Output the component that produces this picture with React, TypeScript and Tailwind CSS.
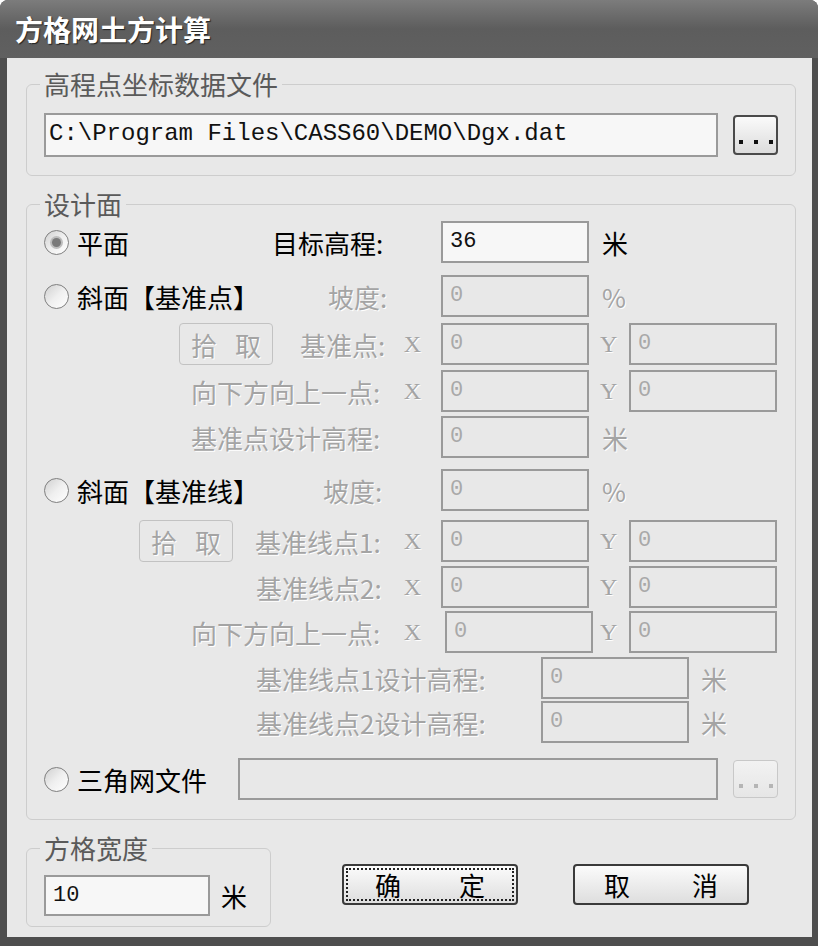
import React from "react";

function Radio({ checked }: { checked?: boolean }) {
  return (
    <span className="w-[25px] h-[25px] rounded-full border border-[#7f7f7f] bg-linear-to-br from-[#d0d0d0] via-[#efefef] to-[#ffffff] flex items-center justify-center shrink-0">
      {checked && <span className="w-[9px] h-[9px] rounded-full bg-[#7a7a7a] ring-2 ring-[#bdbdbd]" />}
    </span>
  );
}

function Field({ value, enabled, cls }: { value: string; enabled?: boolean; cls: string }) {
  return (
    <div
      className={
        "h-[42px] border-2 border-[#9a9a9a] flex items-center pl-[7px] pb-[1px] text-[22px] font-['Liberation_Mono',monospace] shrink-0 " +
        (enabled ? "bg-[#f7f7f7] text-[#111]" : "text-[#a9a9a9]") +
        " " +
        cls
      }
    >
      {value}
    </div>
  );
}

const DIS = "text-[#a4a4a4] [text-shadow:1px_1px_0_#ffffff]";

function X() {
  return <span className={"ml-auto mr-[20px] text-[24px] leading-none font-['Liberation_Serif',serif] " + DIS}>X</span>;
}

function YCol() {
  return (
    <div className="w-[40px] shrink-0 pl-[11px] flex items-center">
      <span className={"text-[24px] leading-none font-['Liberation_Serif',serif] " + DIS}>Y</span>
    </div>
  );
}

function Unit({ text, enabled }: { text: string; enabled?: boolean }) {
  return (
    <div className={"w-[40px] shrink-0 pl-[13px] text-[26px] " + (enabled ? "text-black" : DIS)}>{text}</div>
  );
}

function PickBtn({ cls }: { cls: string }) {
  return (
    <div className={"h-[42px] w-[94px] shrink-0 rounded-[4px] border border-[#c2c2c2] flex items-center justify-center gap-[18px] text-[26px] " + DIS + " " + cls}>
      <span>拾</span>
      <span>取</span>
    </div>
  );
}

function DotBtn({ enabled, cls }: { enabled?: boolean; cls: string }) {
  return (
    <div
      className={
        "w-[45px] shrink-0 rounded-[4px] flex items-end justify-center gap-[11px] pb-[9px] " +
        (enabled
          ? "h-[40px] border-2 border-[#4a4a4a] bg-linear-to-b from-[#fafafa] to-[#dcdcdc]"
          : "h-[38px] border border-[#c8c8c8] bg-linear-to-b from-[#f2f2f2] to-[#e6e6e6]") +
        " " +
        cls
      }
    >
      <span className={"w-[4px] h-[4px] " + (enabled ? "bg-[#111]" : "bg-[#b5b5b5]")} />
      <span className={"w-[4px] h-[4px] " + (enabled ? "bg-[#111]" : "bg-[#b5b5b5]")} />
      <span className={"w-[4px] h-[4px] " + (enabled ? "bg-[#111]" : "bg-[#b5b5b5]")} />
    </div>
  );
}

function Legend({ text }: { text: string }) {
  return (
    <legend className="ml-[13px] px-[4px] text-[26px] leading-[32px] text-[#5a5a5a]">{text}</legend>
  );
}

export default function App() {
  return (
    <div className="w-[818px] h-[946px] bg-white font-['Noto_Sans_CJK_SC',sans-serif]">
      <div className="w-[818px] h-[946px] rounded-t-[8px] bg-[#4e4e4e] flex flex-col overflow-hidden">
        {/* title bar */}
        <div className="h-[58px] shrink-0 bg-linear-to-b from-[#7c7c7c] via-[#5d5d5d] to-[#606060] flex items-center pl-[15px]">
          <span className="text-[28px] font-bold text-white [text-shadow:1px_1px_1px_#222222] leading-none">方格网土方计算</span>
        </div>
        {/* client */}
        <div className="flex-1 ml-[7px] mr-[6px] bg-[#e8e8e8] pl-[19px] pr-[16px] pt-[10px] flex flex-col text-black">
          {/* group 1 */}
          <fieldset className="border border-[#cdcdcd] rounded-[6px]">
            <Legend text="高程点坐标数据文件" />
            <div className="pl-[17px] pt-[13px] pb-[18px] flex items-center">
              <div className="h-[44px] w-[674px] border-2 border-[#9a9a9a] bg-[#f7f7f7] flex items-center pl-[3px] pb-[2px] text-[24px] text-[#111] font-['Liberation_Mono',monospace]">
                C:\Program Files\CASS60\DEMO\Dgx.dat
              </div>
              <DotBtn enabled cls="ml-[15px]" />
            </div>
          </fieldset>

          {/* group 2 */}
          <fieldset className="mt-[12px] border border-[#cdcdcd] rounded-[6px]">
            <Legend text="设计面" />
            <div className="pl-[17px] pt-[1px] pb-[19px] flex flex-col text-[26px]">
              {/* r1 */}
              <div className="h-[42px] flex items-center">
                <div className="w-[397px] shrink-0 flex items-center">
                  <div className="w-[228px] shrink-0 flex items-center gap-[8px]">
                    <Radio checked />
                    <span>平面</span>
                  </div>
                  <span>目标高程:</span>
                </div>
                <Field value="36" enabled cls="w-[148px]" />
                <Unit text="米" enabled />
              </div>
              {/* r2 */}
              <div className="mt-[12px] h-[42px] flex items-center">
                <div className="w-[397px] shrink-0 flex items-center">
                  <div className="w-[284px] shrink-0 flex items-center gap-[8px]">
                    <Radio />
                    <span>斜面【基准点】</span>
                  </div>
                  <span className={DIS}>坡度:</span>
                </div>
                <Field value="0" cls="w-[148px]" />
                <Unit text="%" />
              </div>
              {/* r3 */}
              <div className="mt-[6px] h-[42px] flex items-center">
                <div className="w-[397px] shrink-0 flex items-center">
                  <PickBtn cls="ml-[135px]" />
                  <span className={"ml-[27px] " + DIS}>基准点:</span>
                  <X />
                </div>
                <Field value="0" cls="w-[148px]" />
                <YCol />
                <Field value="0" cls="w-[148px]" />
              </div>
              {/* r4 */}
              <div className="mt-[5px] h-[42px] flex items-center">
                <div className="w-[397px] shrink-0 flex items-center">
                  <span className={"ml-[147px] " + DIS}>向下方向上一点:</span>
                  <X />
                </div>
                <Field value="0" cls="w-[148px]" />
                <YCol />
                <Field value="0" cls="w-[148px]" />
              </div>
              {/* r5 */}
              <div className="mt-[4px] h-[42px] flex items-center">
                <div className="w-[397px] shrink-0 flex items-center">
                  <span className={"ml-[147px] " + DIS}>基准点设计高程:</span>
                </div>
                <Field value="0" cls="w-[148px]" />
                <Unit text="米" />
              </div>
              {/* r6 */}
              <div className="mt-[11px] h-[42px] flex items-center">
                <div className="w-[397px] shrink-0 flex items-center">
                  <div className="w-[279px] shrink-0 flex items-center gap-[8px]">
                    <Radio />
                    <span>斜面【基准线】</span>
                  </div>
                  <span className={DIS}>坡度:</span>
                </div>
                <Field value="0" cls="w-[148px]" />
                <Unit text="%" />
              </div>
              {/* r7 */}
              <div className="mt-[9px] h-[42px] flex items-center">
                <div className="w-[397px] shrink-0 flex items-center">
                  <PickBtn cls="ml-[95px]" />
                  <span className={"ml-[22px] " + DIS}>基准线点1:</span>
                  <X />
                </div>
                <Field value="0" cls="w-[148px]" />
                <YCol />
                <Field value="0" cls="w-[148px]" />
              </div>
              {/* r8 */}
              <div className="mt-[4px] h-[42px] flex items-center">
                <div className="w-[397px] shrink-0 flex items-center">
                  <span className={"ml-[212px] " + DIS}>基准线点2:</span>
                  <X />
                </div>
                <Field value="0" cls="w-[148px]" />
                <YCol />
                <Field value="0" cls="w-[148px]" />
              </div>
              {/* r9 */}
              <div className="mt-[3px] h-[42px] flex items-center">
                <div className="w-[397px] shrink-0 flex items-center">
                  <span className={"ml-[147px] " + DIS}>向下方向上一点:</span>
                  <X />
                </div>
                <Field value="0" cls="w-[148px] ml-[4px]" />
                <div className="w-[36px] shrink-0 pl-[7px] flex items-center">
                  <span className={"text-[24px] leading-none font-['Liberation_Serif',serif] " + DIS}>Y</span>
                </div>
                <Field value="0" cls="w-[148px]" />
              </div>
              {/* r10 */}
              <div className="mt-[4px] h-[42px] flex items-center">
                <div className="w-[497px] shrink-0 flex items-center">
                  <span className={"ml-[212px] " + DIS}>基准线点1设计高程:</span>
                </div>
                <Field value="0" cls="w-[148px]" />
                <div className={"shrink-0 pl-[12px] " + DIS}>米</div>
              </div>
              {/* r11 */}
              <div className="mt-[2px] h-[42px] flex items-center">
                <div className="w-[497px] shrink-0 flex items-center">
                  <span className={"ml-[212px] " + DIS}>基准线点2设计高程:</span>
                </div>
                <Field value="0" cls="w-[148px]" />
                <div className={"shrink-0 pl-[12px] " + DIS}>米</div>
              </div>
              {/* r12 */}
              <div className="mt-[15px] h-[42px] flex items-center">
                <div className="w-[194px] shrink-0 flex items-center gap-[8px]">
                  <Radio />
                  <span>三角网文件</span>
                </div>
                <Field value="" cls="w-[480px]" />
                <DotBtn cls="ml-[15px]" />
              </div>
            </div>
          </fieldset>

          {/* bottom */}
          <div className="mt-[12px] flex items-start">
            <fieldset className="w-[245px] border border-[#cdcdcd] rounded-[6px]">
              <Legend text="方格宽度" />
              <div className="pl-[17px] pt-[11px] pb-[10px] flex items-center">
                <div className="h-[41px] w-[166px] border-2 border-[#9a9a9a] bg-[#f7f7f7] flex items-center pl-[7px] pb-[1px] text-[22px] text-[#111] font-['Liberation_Mono',monospace]">
                  10
                </div>
                <span className="ml-[11px] text-[26px]">米</span>
              </div>
            </fieldset>
            <div className="ml-[71px] mt-[32px] h-[41px] w-[176px] rounded-[4px] border-2 border-[#3a3a3a] bg-linear-to-b from-[#fbfbfb] to-[#dedede] p-[2px]">
              <div className="h-full w-full border-2 border-dotted border-[#222] flex items-center justify-between px-[27px] text-[26px]">
                <span>确</span>
                <span>定</span>
              </div>
            </div>
            <div className="ml-[55px] mt-[32px] h-[41px] w-[176px] rounded-[4px] border-2 border-[#3a3a3a] bg-linear-to-b from-[#fbfbfb] to-[#dedede] flex items-center justify-between px-[29px] text-[26px]">
              <span>取</span>
              <span>消</span>
            </div>
          </div>
        </div>
        <div className="h-[9px] shrink-0" />
      </div>
    </div>
  );
}
